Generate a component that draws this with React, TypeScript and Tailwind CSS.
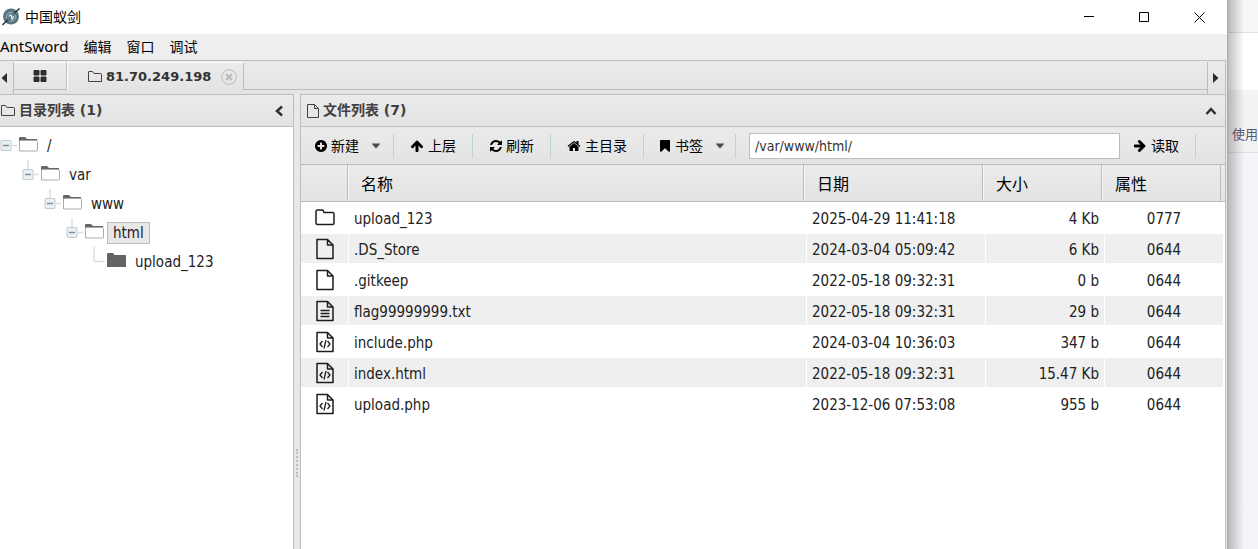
import type { ReactNode } from 'react';
import clsx from 'clsx';

type FileKind = 'folder' | 'file' | 'text' | 'code';

interface FileEntry {
  name: string;
  date: string;
  size: string;
  mode: string;
  kind: FileKind;
}

const MENU = ['编辑', '窗口', '调试'];

const FILES: FileEntry[] = [
  { name: 'upload_123', date: '2025-04-29 11:41:18', size: '4 Kb', mode: '0777', kind: 'folder' },
  { name: '.DS_Store', date: '2024-03-04 05:09:42', size: '6 Kb', mode: '0644', kind: 'file' },
  { name: '.gitkeep', date: '2022-05-18 09:32:31', size: '0 b', mode: '0644', kind: 'file' },
  { name: 'flag99999999.txt', date: '2022-05-18 09:32:31', size: '29 b', mode: '0644', kind: 'text' },
  { name: 'include.php', date: '2024-03-04 10:36:03', size: '347 b', mode: '0644', kind: 'code' },
  { name: 'index.html', date: '2022-05-18 09:32:31', size: '15.47 Kb', mode: '0644', kind: 'code' },
  { name: 'upload.php', date: '2023-12-06 07:53:08', size: '955 b', mode: '0644', kind: 'code' },
];

const TREE = [
  { name: '/', indent: 'pl-0', open: true },
  { name: 'var', indent: 'pl-[22px]', open: true },
  { name: 'www', indent: 'pl-[44px]', open: true },
  { name: 'html', indent: 'pl-[66px]', open: true, selected: true },
  { name: 'upload_123', indent: 'pl-[88px]', open: false },
];

const ICON_PATHS = {
  plus: 'M1344 960V832q0-26-19-45t-45-19h-256V512q0-26-19-45t-45-19H832q-26 0-45 19t-19 45v256H512q-26 0-45 19t-19 45v128q0 26 19 45t45 19h256v256q0 26 19 45t45 19h128q26 0 45-19t19-45v-256h256q26 0 45-19t19-45zm320-64q0 209-103 385.500T1281.500 1561 896 1664t-385.500-103T231 1281.500 128 896t103-385.500T510.500 231 896 128t385.500 103T1561 510.500 1664 896z',
  up: 'M1675 971q0 51-37 90l-75 75q-38 38-91 38-54 0-90-38L1088 843v704q0 52-37.500 84.500T960 1664H832q-53 0-90.500-32.500T704 1547V843l-294 293q-36 38-90 38t-90-38l-75-75q-38-38-38-90 0-53 38-91l651-651q35-37 90-37 54 0 91 37l651 651q37 39 37 91z',
  refresh:
    'M1639 1056q0 5-1 7-64 268-268 434.500T892 1664q-146 0-282.500-55T366 1452l-129 129q-19 19-45 19t-45-19-19-45v-448q0-26 19-45t45-19h448q26 0 45 19t19 45-19 45l-137 137q71 66 161 102t187 36q134 0 250-65t186-179q11-17 53-117 8-23 30-23h192q13 0 22.500 9.500t9.500 22.500zm25-800v448q0 26-19 45t-45 19h-448q-26 0-45-19t-19-45 19-45l138-138Q1097 384 896 384q-134 0-250 65T460 628q-11 17-53 117-8 23-30 23H178q-13 0-22.500-9.500T146 736v-7q65-268 270-434.500T896 128q146 0 284 55.500T1425 340l130-129q19-19 45-19t45 19 19 45z',
  home: 'M1472 992v480q0 26-19 45t-45 19h-384v-384H768v384H384q-26 0-45-19t-19-45V992q0-1 .5-3t.5-3l575-474 575 474q1 2 1 6zm223-69l-62 74q-8 9-21 11h-3q-13 0-21-7L896 424l-692 577q-12 8-24 7-13-2-21-11l-62-74q-8-10-7-23.500t11-21.500l719-599q32-26 76-26t76 26l244 204V288q0-14 9-23t23-9h192q14 0 23 9t9 23v408l219 182q10 8 11 21.500t-7 23.500z',
  bookmark:
    'M1420 128q23 0 44 9 33 13 52.500 41t19.500 62v1289q0 34-19.500 62t-52.500 41q-19 8-44 8-48 0-83-32l-441-424-441 424q-36 33-83 33-23 0-44-9-33-13-52.500-41t-19.500-62V240q0-34 19.500-62t52.500-41q21-9 44-9z',
};

function Glyph({ name, className }: { name: keyof typeof ICON_PATHS; className?: string }) {
  return (
    <svg viewBox="0 0 1792 1792" fill="currentColor" className={clsx('size-[14px] shrink-0', className)} aria-hidden="true">
      <path d={ICON_PATHS[name]} />
    </svg>
  );
}

function Caret() {
  return (
    <svg viewBox="0 0 10 6" className="ml-[9px] h-[6px] w-[10px] shrink-0" fill="#4a4a4a" aria-hidden="true">
      <path d="M0.500 0.500H9.500L5 5.500z" />
    </svg>
  );
}

function Logo() {
  return (
    <svg viewBox="0 0 18 18" className="size-[18px]" aria-hidden="true">
      <circle cx="9" cy="8.500" r="8" fill="#587582" />
      <path d="M4.500 10.500C3.500 6.500 7 3.500 10.500 4.500M13.500 7C14.500 11 11 13.500 7.500 13" fill="none" stroke="#a9bac1" strokeWidth="1" />
      <path d="M7 8.500Q8 6 9.500 7.500V10.500Q10.500 12 11.500 8" fill="none" stroke="#e4ebee" strokeWidth="1.300" />
      <path d="M0.500 17L5.500 12M12.500 5L17.500 0.500" stroke="#26343b" strokeWidth="1.500" />
    </svg>
  );
}

function OutlineFolder() {
  return (
    <svg viewBox="0 0 14 12" className="h-3 w-[14px] shrink-0" fill="none" stroke="#404040" aria-hidden="true">
      <path d="M0.500 1Q0.500 0.500 1 0.500H4.500L6 2.500H12.500Q13.500 2.500 13.500 3.500V10.500H0.500z" />
    </svg>
  );
}

function OutlineFile() {
  return (
    <svg viewBox="0 0 12 14" className="h-[14px] w-3 shrink-0" fill="none" stroke="#404040" aria-hidden="true">
      <path d="M0.500 0.500H7.500L11.500 4.500V13.500H0.500zM7.500 0.500V4.500H11.500" />
    </svg>
  );
}

function FileIcon({ kind }: { kind: FileKind }) {
  if (kind === 'folder') {
    return (
      <svg viewBox="0 0 20 22" className="h-[22px] w-5" fill="none" stroke="#1c1c1c" strokeWidth="1.500" aria-hidden="true">
        <path d="M1 4.500Q1 3 2.500 3H7Q8 3 8.500 4L9 5.500H17.500Q19 5.500 19 7V16Q19 17.500 17.500 17.500H2.500Q1 17.500 1 16z" />
      </svg>
    );
  }
  return (
    <svg viewBox="0 0 20 22" className="h-[22px] w-5" fill="none" stroke="#1c1c1c" strokeWidth="1.500" aria-hidden="true">
      <path d="M2 1.500H12.500L18 7V20.500H2zM12.500 1.500V7H18" strokeLinejoin="round" />
      {kind === 'text' && <path d="M5.500 10.500H14.500M5.500 13.500H14.500M5.500 16.500H14.500" />}
      {kind === 'code' && <path d="M7.500 10L5 13L7.500 16M12.500 10L15 13L12.500 16M11 9L9 17.500" strokeWidth="1.300" />}
    </svg>
  );
}

function TreeLines({ root, open }: { root: boolean; open: boolean }) {
  return (
    <svg viewBox="0 0 18 29" className="h-[29px] w-[18px] shrink-0" fill="none" aria-hidden="true">
      {!root && <path d={open ? 'M6 0V9' : 'M6 0V14.500'} stroke="#dedede" strokeWidth="1.500" />}
      <path d={open ? 'M12 14.500H17' : 'M6 14.500H17'} stroke="#dedede" strokeWidth="1.500" />
      {open && (
        <>
          <rect x="1" y="9.500" width="10" height="10" rx="1" fill="#eaf0f3" stroke="#bccad2" />
          <path d="M3 14.500H9" stroke="#78909c" strokeWidth="1.500" />
        </>
      )}
    </svg>
  );
}

function TreeFolder({ open }: { open: boolean }) {
  return (
    <svg viewBox="0 0 20 16" className="mb-[3px] h-4 w-5 shrink-0" aria-hidden="true">
      {open ? (
        <>
          <path d="M1 15V2Q1 1 2 1H7L9 3H19V5H2V15z" fill="#666" />
          <rect x="1.500" y="4.500" width="18" height="10.500" rx="1" fill="#fff" stroke="#aaa" />
        </>
      ) : (
        <path d="M1 15V2Q1 1 2 1H7L8.500 3H19Q20 3 20 4V15z" fill="#646464" />
      )}
    </svg>
  );
}

function ToolButton({ children, className }: { children: ReactNode; className?: string }) {
  return (
    <div className="flex h-6 items-center border-r border-[#bfd1d8]">
      <button type="button" className={clsx('flex h-6 items-center text-sm whitespace-nowrap', className)}>
        {children}
      </button>
    </div>
  );
}

function TitleBar() {
  return (
    <header className="flex h-[34px] shrink-0 items-center bg-white pl-[2px]">
      <Logo />
      <h1 className="ml-[5px] text-sm">中国蚁剑</h1>
      <div className="ml-auto flex pr-[22px]">
        <button type="button" aria-label="Minimize" className="px-[22px]">
          <svg viewBox="0 0 11 11" className="size-[11px]" stroke="#000"><path d="M0 4.500H10" /></svg>
        </button>
        <button type="button" aria-label="Maximize" className="px-[22px]">
          <svg viewBox="0 0 11 11" className="size-[11px]" stroke="#000" fill="none"><path d="M0.500 0.500H9.500V9.500H0.500z" /></svg>
        </button>
        <button type="button" aria-label="Close" className="pl-[22px]">
          <svg viewBox="0 0 11 11" className="size-[11px]" stroke="#000"><path d="M0.500 0.500L10.500 10.500M10.500 0.500L0.500 10.500" /></svg>
        </button>
      </div>
    </header>
  );
}

function TabBar() {
  return (
    <div className="mr-[1px] flex h-[34px] shrink-0 border-t border-r border-[#bdbdbd] bg-linear-to-b from-[#ebebeb] to-[#e3e3e3] pt-[1px]">
      <button type="button" aria-label="Scroll left" className="flex w-[14px] items-center border-r border-[#bdbdbd] pl-[1px]">
        <svg viewBox="0 0 6 10" className="h-[10px] w-[6px]" fill="#2c2c2c"><path d="M6 0V10L0.500 5z" /></svg>
      </button>
      <div className="flex h-7 flex-1" role="tablist">
        <button type="button" role="tab" aria-selected="false" aria-label="Home" className="flex w-[53px] items-center justify-center border-t border-r border-b border-t-white border-r-[#bdbdbd] border-b-[#bdbdbd]">
          <svg viewBox="0 0 14 12" className="h-3 w-[14px]" fill="#2e2e2e">
            <path d="M1 0.500H6V5H1zM8 0.500H13V5H8zM1 7H6V11.500H1zM8 7H13V11.500H8z" stroke="#2e2e2e" strokeLinejoin="round" />
          </svg>
        </button>
        <div role="tab" aria-selected="true" className="flex items-center border-t border-r border-l border-t-white border-r-[#bdbdbd] border-l-white pr-[6px] pl-5 text-[#333]">
          <OutlineFolder />
          <span className="ml-1 font-['DejaVu_Sans'] text-[13px] font-bold">81.70.249.198</span>
          <button type="button" aria-label="Close tab" className="ml-[10px]">
            <svg viewBox="0 0 16 16" className="size-4" fill="none" stroke="#bbb">
              <circle cx="8" cy="8" r="7.300" />
              <path d="M5 5L11 11M11 5L5 11" strokeWidth="2.400" />
            </svg>
          </button>
        </div>
        <div className="flex-1 border-b border-[#bdbdbd]" />
      </div>
      <button type="button" aria-label="Scroll right" className="flex w-[18px] items-center border-l border-[#bdbdbd] pl-[5px]">
        <svg viewBox="0 0 6 10" className="h-[10px] w-[6px]" fill="#2c2c2c"><path d="M0 0V10L5.500 5z" /></svg>
      </button>
    </div>
  );
}

function PanelHeader({ icon, title, action }: { icon: ReactNode; title: string; action: ReactNode }) {
  return (
    <div className="flex h-[33px] shrink-0 items-center border-t border-b border-[#bdbdbd] bg-linear-to-b from-[#ebebeb] to-[#e3e3e3] text-[#404040]">
      {icon}
      <h2 className="ml-1 font-['DejaVu_Sans','Noto_Sans_CJK_SC',sans-serif] text-[14px] font-bold">{title}</h2>
      {action}
    </div>
  );
}

function DirectoryPanel() {
  return (
    <section className="flex w-[294px] shrink-0 flex-col border-r border-[#bdbdbd] bg-white">
      <PanelHeader
        icon={<span className="pl-[1px]"><OutlineFolder /></span>}
        title="目录列表 (1)"
        action={
          <button type="button" aria-label="Collapse" className="mr-[10px] ml-auto">
            <svg viewBox="0 0 8 12" className="h-3 w-2" fill="none" stroke="#303030" strokeWidth="2.500"><path d="M7 1.500L2 6L7 10.500" /></svg>
          </button>
        }
      />
      <ul className="pt-1">
        {TREE.map(({ name, indent, open, selected }, i) => (
          <li key={name} className={clsx('flex h-[29px] items-center', indent)}>
            <TreeLines root={i === 0} open={open} />
            <TreeFolder open={open} />
            <button
              type="button"
              className={clsx(
                'ml-[3px] h-[22px] border px-[5px] text-[15px] leading-5 text-[#222]',
                selected ? 'border-[#bdbdbd] bg-[#e7e7e7]' : 'border-transparent'
              )}
            >
              {name}
            </button>
          </li>
        ))}
      </ul>
    </section>
  );
}

function FileTable() {
  return (
    <table className="block w-full text-[#222]">
      <thead className="block border-b border-[#bdbdbd] bg-linear-to-b from-[#ebebeb] to-[#e3e3e3] pr-1 text-black">
        <tr className="grid h-9 grid-cols-[47px_1fr_179px_119px_119px] text-left text-base leading-8">
          <th className="border-r border-[#bdbdbd]" aria-label="类型" />
          <th className="border-r border-l border-r-[#bdbdbd] border-l-[#f5f5f5] pt-1 pl-3 font-normal">名称</th>
          <th className="border-r border-l border-r-[#bdbdbd] border-l-[#f5f5f5] pt-1 pl-3 font-normal">日期</th>
          <th className="border-r border-l border-r-[#bdbdbd] border-l-[#f5f5f5] pt-1 pl-3 font-normal">大小</th>
          <th className="border-r border-l border-r-[#bdbdbd] border-l-[#f5f5f5] pt-1 pl-3 font-normal">属性</th>
        </tr>
      </thead>
      <tbody className="block pr-[1px] text-[15px] leading-[25px]">
        {FILES.map(({ name, date, size, mode, kind }, i) => (
          <tr
            key={name}
            className={clsx(
              'grid h-[31px] grid-cols-[48px_1fr_179px_119px_119px] border-y border-white',
              i % 2 === 1 ? 'bg-[#efefef]' : 'bg-white'
            )}
          >
            <td className="flex items-center justify-center border-r border-white"><FileIcon kind={kind} /></td>
            <td className="border-r border-white pt-1 pl-[5px]">{name}</td>
            <td className="border-r border-white pt-1 pl-[5px] whitespace-nowrap">{date}</td>
            <td className="border-r border-white pt-1 pr-[5px] text-right">{size}</td>
            <td className="border-r border-white pt-1 text-center">{mode}</td>
          </tr>
        ))}
      </tbody>
    </table>
  );
}

function FilePanel() {
  return (
    <section className="mr-[1px] flex min-w-0 flex-1 flex-col border-x border-[#bdbdbd] bg-white">
      <PanelHeader
        icon={<span className="pl-[6px]"><OutlineFile /></span>}
        title="文件列表 (7)"
        action={
          <button type="button" aria-label="Collapse" className="mr-2 ml-auto">
            <svg viewBox="0 0 12 8" className="h-2 w-3" fill="none" stroke="#303030" strokeWidth="2.500"><path d="M1.500 7L6 2L10.500 7" /></svg>
          </button>
        }
      />
      <div className="flex h-[38px] shrink-0 items-center border-b border-[#bdbdbd] bg-linear-to-b from-[#ebebeb] to-[#e3e3e3]">
        <ToolButton className="gap-[3px] pr-3 pl-[13px]"><Glyph name="plus" />新建<Caret /></ToolButton>
        <ToolButton className="gap-1 px-4"><Glyph name="up" />上层</ToolButton>
        <ToolButton className="gap-[3px] px-4"><Glyph name="refresh" />刷新</ToolButton>
        <ToolButton className="gap-1 px-4"><Glyph name="home" />主目录</ToolButton>
        <ToolButton className="gap-[3px] pr-[10px] pl-[14px]"><Glyph name="bookmark" />书签<Caret /></ToolButton>
        <input
          aria-label="路径"
          defaultValue="/var/www/html/"
          className="ml-[13px] h-[26px] min-w-0 flex-1 border border-[#bdbdbd] bg-white px-[5px] text-[14px] text-[#333] outline-none"
        />
        <div className="mr-[29px]">
          <ToolButton className="gap-1 pr-4 pl-[13px]"><Glyph name="up" className="rotate-90" />读取</ToolButton>
        </div>
      </div>
      <FileTable />
    </section>
  );
}

export default function App() {
  return (
    <div className="flex h-screen overflow-hidden bg-[#f4f5f8] font-['DejaVu_Sans_Condensed','Noto_Sans_CJK_SC',sans-serif] text-black">
      <main className="flex min-w-0 flex-1 flex-col border-r border-[#aaa] bg-[#eee]">
        <TitleBar />
        <nav className="flex h-[26px] shrink-0 items-center gap-[15px] font-['Noto_Sans','Noto_Sans_CJK_SC',sans-serif] text-sm">
          <button type="button" className="text-[15px]">AntSword</button>
          {MENU.map((item) => (
            <button key={item} type="button">{item}</button>
          ))}
        </nav>
        <TabBar />
        <div className="flex min-h-0 flex-1 bg-[#e8e8e8]">
          <DirectoryPanel />
          <div className="flex w-[6px] shrink-0 items-start justify-center pt-[355px]">
            <div className="h-7 border-l-2 border-dotted border-[#bdbdbd]" />
          </div>
          <FilePanel />
        </div>
      </main>

      {/* Window sitting behind, with the drop shadow falling on it */}
      <aside className="relative flex w-[30px] shrink-0 flex-col overflow-hidden">
        <div className="h-[33px] border-b border-[#e0e0e0] bg-[#f6f6f6]" />
        <div className="h-[57px] bg-white" />
        <div className="flex h-[63px] items-center border-b border-[#e0e0e0] bg-[#f3f3f3] pt-[26px] pl-1 font-['Noto_Sans_CJK_SC',sans-serif] text-[13px] whitespace-nowrap text-[#5a5a70]">
          使用
        </div>
        <div className="absolute inset-y-0 left-0 w-4 bg-linear-to-r from-black/25 to-transparent" />
      </aside>
    </div>
  );
}
